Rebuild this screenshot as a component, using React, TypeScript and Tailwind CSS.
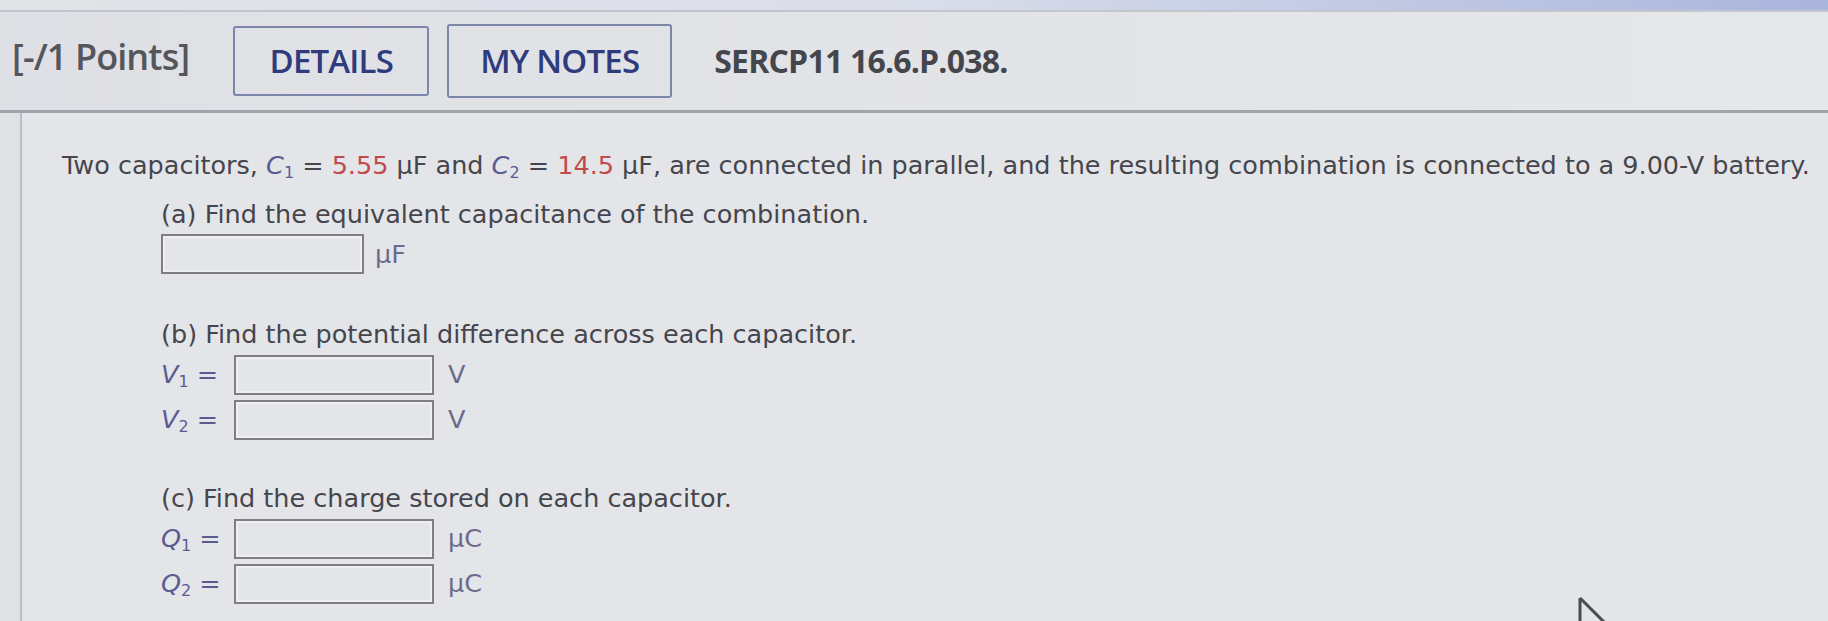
import React from "react";

const body = { fontFamily: '"DejaVu Sans", Verdana, sans-serif' };
const head = { fontFamily: '"Open Sans", "Liberation Sans", sans-serif' };

const Box = ({ w = "w-[200px]" }: { w?: string }) => (
  <span className={`inline-block ${w} h-[40px] border-2 border-[#7e7e83] bg-[#e4e5e8] shadow-[inset_0_0_0_2px_#eeeff1]`} />
);

const Sym = ({ s, sub }: { s: string; sub: string }) => (
  <span className="italic text-[#5a5b93]">
    {s}
    <sub className="text-[16px] not-italic">{sub}</sub>
  </span>
);

const Row = ({ s, sub, unit }: { s: string; sub: string; unit: string }) => (
  <div className="flex items-center h-[45px]">
    <span className="w-[73px] shrink-0 text-[#5a5b93]">
      <Sym s={s} sub={sub} /> =
    </span>
    <Box />
    <span className="ml-[14px] text-[#6a6b8a]">{unit}</span>
  </div>
);

export default function App() {
  return (
    <div className="relative w-[1828px] h-[621px] overflow-hidden bg-[#e4e5e8]">
      <div className="h-[12px] bg-gradient-to-r from-[#e2e3e7] via-[#dadeea] to-[#aab5dd] border-b-2 border-[#c4c6cd]" />
      <div
        className="flex items-center h-[101px] pl-[12px] bg-gradient-to-r from-[#dfe0e5] to-[#e6e7ea] border-b-[3px] border-[#a2a4ac]"
        style={head}
      >
        <span className="-mt-[8px] text-[36px] font-semibold text-[#55565c] tracking-tight">[-/1 Points]</span>
        <div className="ml-[44px] flex items-center justify-center w-[196px] h-[70px] border-2 border-[#7c86ab] rounded-[3px] text-[33px] font-semibold text-[#2e3b7c] tracking-tight">
          DETAILS
        </div>
        <div className="ml-[18px] flex items-center justify-center w-[225px] h-[74px] border-2 border-[#7c86ab] rounded-[3px] text-[33px] font-semibold text-[#2e3b7c] tracking-tight">
          MY NOTES
        </div>
        <span className="ml-[42px] text-[32px] font-bold text-[#45464c] tracking-tight">SERCP11 16.6.P.038.</span>
      </div>
      <div className="flex h-full">
        <div className="w-[22px] border-r-2 border-[#b8bccd] bg-[#e0e1e5]" />
        <div className="flex-1 pl-[40px] pt-[34px] text-[25.5px] text-[#45464d]" style={body}>
          <div className="h-[36px] leading-[36px] whitespace-nowrap">
            Two capacitors, <Sym s="C" sub="1" /> = <span className="text-[#c04a4c]">5.55</span> μF and{" "}
            <Sym s="C" sub="2" /> = <span className="text-[#c04a4c]">14.5</span> μF, are connected in parallel, and the
            resulting combination is connected to a 9.00-V battery.
          </div>
          <div className="pl-[99px]">
            <div className="mt-[13px] h-[36px] leading-[36px]">(a) Find the equivalent capacitance of the combination.</div>
            <div className="flex items-center h-[44px]">
              <Box w="w-[203px]" />
              <span className="ml-[11px] text-[#6a6b8a]">μF</span>
            </div>
            <div className="mt-[40px] h-[36px] leading-[36px]">(b) Find the potential difference across each capacitor.</div>
            <Row s="V" sub="1" unit="V" />
            <Row s="V" sub="2" unit="V" />
            <div className="mt-[38px] h-[36px] leading-[36px]">(c) Find the charge stored on each capacitor.</div>
            <Row s="Q" sub="1" unit="μC" />
            <Row s="Q" sub="2" unit="μC" />
          </div>
        </div>
      </div>
      <svg className="absolute left-[1578px] top-[596px]" width="50" height="30" viewBox="0 0 50 30">
        <path d="M2 2 L2 30 M2 2 L30 30" stroke="#4a4c55" strokeWidth="3" fill="none" />
      </svg>
    </div>
  );
}
